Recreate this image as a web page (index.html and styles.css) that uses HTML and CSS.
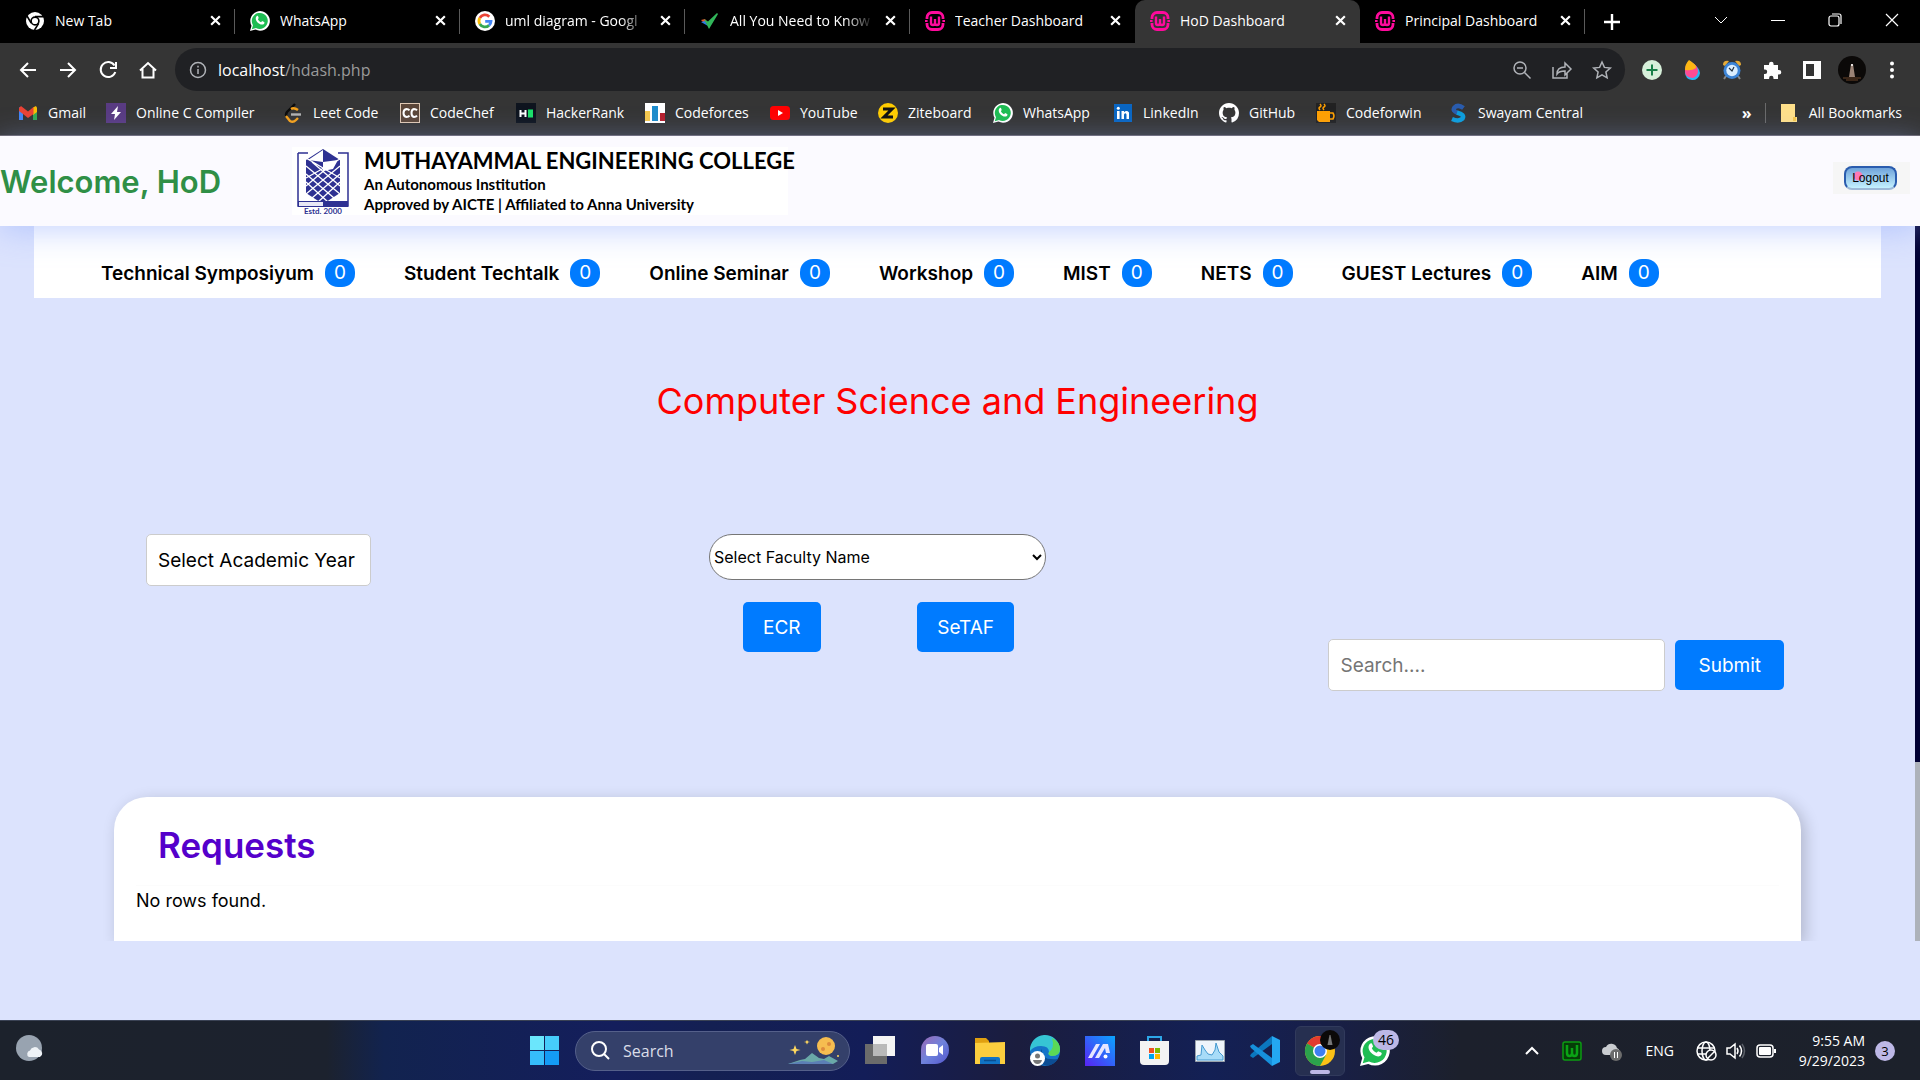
FILE: index.html
```html
<!DOCTYPE html>
<html lang="en">
<head>
<meta charset="utf-8">
<title>HoD Dashboard</title>
<link rel="stylesheet" href="styles.css">
</head>
<body>
<svg class="defs" aria-hidden="true">
  <symbol id="x" viewBox="0 0 12 12"><path d="M2 2l8 8M10 2l-8 8" stroke="#fff" stroke-width="2"/></symbol>
  <symbol id="wa" viewBox="0 0 20 20"><path d="M0 20l1.500-5.300A9.800 9.800 0 1 1 5.500 18.600z" fill="#fff"/><path d="M1.800 18.200l1.200-4a8 8 0 1 1 3 2.800z" fill="#1fbd53"/><path d="M6.600 5.200c.8-.8 1.400-.4 1.700.6l.4 1.200-.8 1.200c.7 1.500 1.700 2.400 3.200 3l1-1.100 2 .9c.8.500.300 1.600-.5 2.200-2 1.200-5-.5-6.500-2.300C5.600 9 5.100 6.800 6.600 5.200z" fill="#fff"/></symbol>
  <symbol id="wamp" viewBox="0 0 20 20"><path d="M2 8V6.500A5 5 0 0 1 7 1.500h6a5 5 0 0 1 5 5V8M2 12v1.500a5 5 0 0 0 5 5h6a5 5 0 0 0 5-5V12M1.200 9v2M18.800 9v2" fill="none" stroke="#ff0a9c" stroke-width="2.800"/><path d="M6 5.500v6.500q0 2 2 2t2-2V8v4q0 2 2 2t2-2V5.500" fill="none" stroke="#ff0a9c" stroke-width="2.400"/></symbol>
</svg>

<nav class="tabs" aria-label="Browser tabs">
  <div class="tab"><svg class="ico" viewBox="0 0 20 20"><circle cx="10" cy="10" r="9" fill="#fff"/><circle cx="10" cy="10" r="3.900" fill="#fff" stroke="#000" stroke-width="1.600"/><path d="M10 5.600h8.500M6.200 12.200L2 5M13.700 12.400L9.500 19" stroke="#000" stroke-width="1.600"/></svg><span>New Tab</span><svg class="close"><use href="#x"/></svg></div>
  <div class="tab"><svg class="ico"><use href="#wa"/></svg><span>WhatsApp</span><svg class="close"><use href="#x"/></svg></div>
  <div class="tab"><svg class="ico" viewBox="0 0 20 20"><circle cx="10" cy="10" r="10" fill="#fff"/><g fill="none" stroke-width="2.800"><path d="M14.300 5.700A6 6 0 0 0 4.800 7" stroke="#ea4335"/><path d="M4.800 7a6 6 0 0 0 0 6" stroke="#fbbc05"/><path d="M4.800 13a6 6 0 0 0 9.200 1.400" stroke="#34a853"/><path d="M14 14.400a6 6 0 0 0 2-4.100h-5.800" stroke="#4285f4"/></g></svg><span class="fade">uml diagram - Googl</span><svg class="close"><use href="#x"/></svg></div>
  <div class="tab"><svg class="ico" viewBox="0 0 20 20"><path d="M1 9l4-1 3 4-3 1z" fill="#e8562a"/><path d="M1 11l4-1 3 5z" fill="#2a7de1"/><path d="M4 8l4 2.500L17 2l1 1-9 15z" fill="#31b65a"/></svg><span class="fade">All You Need to Know</span><svg class="close"><use href="#x"/></svg></div>
  <div class="tab plain"><svg class="ico"><use href="#wamp"/></svg><span>Teacher Dashboard</span><svg class="close"><use href="#x"/></svg></div>
  <div class="tab active"><svg class="ico"><use href="#wamp"/></svg><span>HoD Dashboard</span><svg class="close"><use href="#x"/></svg></div>
  <div class="tab"><svg class="ico"><use href="#wamp"/></svg><span>Principal Dashboard</span><svg class="close"><use href="#x"/></svg></div>
  <button class="newtab" aria-label="New tab"><svg width="16" height="16"><path d="M8 0v16M0 8h16" stroke="#fff" stroke-width="2.400"/></svg></button>
  <div class="winctl">
    <button aria-label="Search tabs"><svg width="14" height="14"><path d="M1 4l6 6 6-6" fill="none" stroke="#fff"/></svg></button>
    <button aria-label="Minimize"><svg width="14" height="14"><path d="M0 7.500h14" stroke="#fff"/></svg></button>
    <button aria-label="Restore"><svg width="14" height="14" fill="none" stroke="#fff" stroke-width="1.200"><rect x="1" y="3" width="10" height="10" rx="2"/><path d="M4 1h7q2 0 2 2v8"/></svg></button>
    <button aria-label="Close"><svg width="14" height="14"><path d="M1 1l12 12M13 1L1 13" stroke="#fff" stroke-width="1.200"/></svg></button>
  </div>
</nav>

<div class="toolbar">
  <button aria-label="Back"><svg viewBox="0 0 20 20"><path d="M18 10H3M10 3l-7 7 7 7"/></svg></button>
  <button aria-label="Forward"><svg viewBox="0 0 20 20"><path d="M2 10h15M10 3l7 7-7 7"/></svg></button>
  <button aria-label="Reload"><svg viewBox="0 0 20 20"><path d="M16.500 5.500A7.500 7.500 0 1 0 17.300 12M18 2v6h-6"/></svg></button>
  <button aria-label="Home"><svg viewBox="0 0 20 20"><path d="M2 10.500L10 3l8 7.500M4.500 9v8.500h11V9"/></svg></button>
  <div class="address">
    <svg viewBox="0 0 20 20" class="dim"><circle cx="10" cy="10" r="7.500"/><path d="M10 9v5M10 5.800v1.800"/></svg>
    <p>localhost<span>/hdash.php</span></p>
    <svg viewBox="0 0 20 20" class="dim"><circle cx="8" cy="8" r="6"/><path d="M12.500 12.500l6 6M5 8h6"/></svg>
    <svg viewBox="0 0 20 20" class="dim"><path d="M1 7v11h14v-5M5 14q0-7 8-7V3l6 6-6 6v-4q-6 0-8 3z"/></svg>
    <svg viewBox="0 0 20 20" class="dim"><path d="M10 2l2.400 5.400 5.900.6-4.400 4 1.200 5.800L10 14.800l-5.100 3 1.200-5.800-4.400-4 5.900-.6z"/></svg>
  </div>
  <div class="extensions">
    <button aria-label="Extension"><svg viewBox="0 0 20 20"><circle cx="10" cy="10" r="10" fill="#d7f0da" stroke="none"/><path d="M10 4.500v11M4.500 10h11" stroke="#188048"/></svg></button>
    <button aria-label="Color picker"><svg viewBox="0 0 20 20" stroke="none"><path d="M8 1q10 7 10 12a7.500 7.500 0 0 1-8 7q-7-1-7-8Q3 6 8 1z" fill="#28b7f5"/><path d="M7 1q9 4 9 10 0 5-5 7-8 0-8-7Q3 5 7 1z" fill="#ff4b93"/><path d="M7 0q8 5 7 8Q10 11 3 10 3 4 7 0z" fill="#fdb713"/></svg></button>
    <button aria-label="Alarm"><svg viewBox="0 0 20 20" stroke="none"><path d="M1 5q0-5 6-4L3 6zM19 5q0-5-6-4l4 5z" fill="#e6ab38"/><path d="M4 16l-2 3M16 16l2 3" stroke="#888"/><circle cx="10" cy="10.500" r="8.500" fill="#3c84d6"/><circle cx="10" cy="10.500" r="5.700" fill="#dbeeff"/><path d="M7 8l3 3 2-4" stroke="#234" stroke-width="1.200" fill="none"/></svg></button>
    <button aria-label="Extensions"><svg viewBox="0 0 20 20"><path d="M2 5h5V4a2.300 2.300 0 0 1 4.600 0v1H16v5h1a2.300 2.300 0 0 1 0 4.600h-1V19h-4.500v-1a2.200 2.200 0 0 0-4.400 0v1H2v-5h1a2.200 2.200 0 0 0 0-4.400H2z" fill="#fff" stroke="none"/></svg></button>
    <button aria-label="Side panel"><svg viewBox="0 0 20 20"><path d="M1 1h18v18H1z" fill="#fff" stroke="none"/><path d="M4 4h8v12H4z" fill="#353535" stroke="none"/></svg></button>
    <button aria-label="Profile"><svg class="avatar" viewBox="0 0 28 28"><circle cx="14" cy="14" r="14" fill="#0b0908"/><path d="M13 8h2l2 13h-6z" fill="#9a8376"/><path d="M5 22h18M8 24h12" stroke="#6b4428" stroke-width="1"/><circle cx="14" cy="9" r="1" fill="#fff"/></svg></button>
    <button aria-label="Menu"><svg viewBox="0 0 20 20"><g fill="#fff" stroke="none"><circle cx="10" cy="3.500" r="2"/><circle cx="10" cy="10" r="2"/><circle cx="10" cy="16.500" r="2"/></g></svg></button>
  </div>
</div>

<nav class="bookmarks" aria-label="Bookmarks">
  <a href="#"><svg viewBox="0 0 20 20"><path d="M1 4v13h4V7z" fill="#4285f4"/><path d="M19 4v13h-4V7z" fill="#34a853"/><path d="M15 4.500L18 3l1 2v4l-4 3z" fill="#fbbc04"/><path d="M1 5l2-2 7 5.500L15.500 4v7L10 15l-5-4-4-3z" fill="#ea4335"/></svg>Gmail</a>
  <a href="#"><svg viewBox="0 0 20 20"><path d="M0 0h20v20H0z" fill="#593b82"/><path d="M12 3l-7 8h4l-1 6 7-8h-4z" fill="#fff"/></svg>Online C Compiler</a>
  <a href="#"><svg viewBox="0 0 20 20" fill="none" stroke-width="2.400"><path d="M12 1L4 9q-2 3 0 5" stroke="#0b0b0b"/><path d="M3 13l4 5q3 2 6-1l2-2M8 6q3-2 7 1" stroke="#f5a11a"/><path d="M8 11.500h10" stroke="#b3b3b3"/></svg>Leet Code</a>
  <a href="#"><svg viewBox="0 0 20 20"><path d="M0 0h20v20H0z" fill="#dfc8b3"/><path d="M1 1h18v18H1z" fill="#5b4638"/><path d="M9.500 7.300q-1-1.300-3-1.300Q3.500 6.500 3.500 10t3 4q2 0 3-1.300M17 7.300Q16 6 14 6q-2.500.5-2.500 4t2.500 4q2 0 3-1.300" fill="none" stroke="#fff" stroke-width="2"/></svg>CodeChef</a>
  <a href="#"><svg viewBox="0 0 20 20"><path d="M0 0h20v20H0z" fill="#0e141e"/><path d="M4.500 7v7M9.500 7v7M4.500 10.500h5" stroke="#fff" stroke-width="2"/><path d="M12 6.500h5v8h-5z" fill="#1be069"/></svg>HackerRank</a>
  <a href="#"><svg viewBox="0 0 20 20"><path d="M0 0h20v20H0z" fill="#fff"/><path d="M0 8h5v10H0z" fill="#f6c94d"/><path d="M7 3h6v15H7z" fill="#1e8ccb"/><path d="M15 10h5v8h-5z" fill="#b61f2c"/></svg>Codeforces</a>
  <a href="#"><svg viewBox="0 0 20 20"><rect y="3" width="20" height="14" rx="3.500" fill="#f00"/><path d="M8 7l5 3-5 3z" fill="#fff"/></svg>YouTube</a>
  <a href="#"><svg viewBox="0 0 20 20"><circle cx="10" cy="10" r="10" fill="#fc0"/><path d="M5 6h9l-8 8h9" fill="none" stroke="#111" stroke-width="3"/></svg>Ziteboard</a>
  <a href="#"><svg><use href="#wa"/></svg>WhatsApp</a>
  <a href="#"><svg viewBox="0 0 20 20"><path d="M1 1h18v18H1z" fill="#0a66c2"/><path d="M4 8h2.600v8H4zM8.500 8H11v1.200q2.800-2.400 5 .3V16h-2.500v-4.500q-1-2.500-2.500 0V16H8.500z" fill="#fff"/><circle cx="5.300" cy="5.300" r="1.500" fill="#fff"/></svg>LinkedIn</a>
  <a href="#"><svg viewBox="0 0 16 16"><path fill="#fff" d="M8 0C3.580 0 0 3.580 0 8c0 3.540 2.290 6.530 5.470 7.590.4.070.55-.17.55-.38 0-.19-.01-.82-.01-1.490-2.010.37-2.530-.49-2.690-.94-.09-.23-.48-.94-.82-1.130-.28-.15-.68-.52-.01-.53.63-.01 1.080.58 1.230.82.72 1.210 1.870.87 2.330.66.070-.52.28-.87.51-1.070-1.780-.2-3.640-.89-3.640-3.950 0-.87.31-1.590.82-2.150-.08-.2-.36-1.020.08-2.120 0 0 .67-.21 2.200.82.640-.18 1.320-.27 2-.27s1.360.09 2 .27c1.530-1.040 2.200-.82 2.200-.82.440 1.100.16 1.920.08 2.120.51.560.82 1.270.82 2.150 0 3.070-1.870 3.750-3.650 3.950.29.25.54.73.54 1.480 0 1.070-.01 1.930-.01 2.200 0 .21.15.46.55.38A8.010 8.010 0 0 0 16 8c0-4.420-3.580-8-8-8z"/></svg>GitHub</a>
  <a href="#"><svg viewBox="0 0 20 20"><path d="M0 0h20v20H0z" fill="#222"/><path d="M1 8h13v11H3l-2-2z" fill="#ffa000"/><path d="M14 10h3q2 3 0 6h-3M4 7q-2-2 0-3t0-3M8 7Q6 5 8 4t0-3" fill="none" stroke="#ffa000" stroke-width="1.500"/></svg>Codeforwin</a>
  <a href="#"><svg viewBox="0 0 20 20" fill="none" stroke-width="4.500"><path d="M15.500 5Q10 1 6.500 4.500 4 8 10 10" stroke="#2a5cad"/><path d="M9 9.600q8 2 5.500 6Q11 19 4 16" stroke="#0d9ddb"/></svg>Swayam Central</a>
  <button class="more" aria-label="More bookmarks">»</button>
  <a href="#" class="all"><svg viewBox="0 0 20 20"><path d="M2 1h14v13h2v5H2z" fill="#ffe08a"/><path d="M14 14h3v4h-3z" fill="#f5c64a"/></svg>All Bookmarks</a>
</nav>

<header class="site">
  <h1>Welcome, HoD</h1>
  <div class="college">
    <svg viewBox="0 0 54 66" width="54" height="66"><path d="M2 5h10M2 5v53h50V5H42" fill="none" stroke="#2e3192" stroke-width="1.500"/><path d="M27 1l17 11v33L27 56 10 45V12z" fill="#2e3192"/><path d="M27 2v12l-15-2zM27 14l15-2-5 9-10 2z" fill="#fff"/><path d="M10 18l34 28M10 26l28 24M10 34l22 20M16 14l28 24M10 10l34 20M44 18L10 46M44 26L16 50M44 34L22 54M38 14L10 38M44 11L10 30" stroke="#fff" stroke-width="1.300"/><path d="M2 53h50v6H2z" fill="#2e3192"/><path d="M3 54h24v4H3z" fill="#e8e8f5"/><text x="27" y="65.500" text-anchor="middle" class="estd">Estd. 2000</text></svg>
    <div><strong>MUTHAYAMMAL ENGINEERING COLLEGE</strong><b>An Autonomous Institution</b><b>Approved by AICTE | Affiliated to Anna University</b></div>
  </div>
  <div class="logout"><button>Logout</button></div>
</header>

<div class="viewport">
  <main>
    <ul class="counts">
      <li>Technical Symposiyum <span>0</span></li>
      <li>Student Techtalk <span>0</span></li>
      <li>Online Seminar <span>0</span></li>
      <li>Workshop <span>0</span></li>
      <li>MIST <span>0</span></li>
      <li>NETS <span>0</span></li>
      <li>GUEST Lectures <span>0</span></li>
      <li>AIM <span>0</span></li>
    </ul>
    <h2>Computer Science and Engineering</h2>
    <form class="filters">
      <select class="year" aria-label="Academic year"><option>Select Academic Year</option></select>
      <div class="faculty">
        <select aria-label="Faculty name"><option>Select Faculty Name</option></select>
        <div class="reports"><button type="button" class="btn">ECR</button><button type="button" class="btn">SeTAF</button></div>
      </div>
      <div class="search"><input type="text" placeholder="Search...." aria-label="Search"><button type="button" class="btn wide">Submit</button></div>
    </form>
    <section class="requests">
      <h2>Requests</h2>
      <p>No rows found.</p>
    </section>
  </main>
  <div class="track"><i></i></div>
</div>

<footer class="taskbar">
  <div><button aria-label="Weather"><svg width="30" height="28"><circle cx="14" cy="13" r="13" fill="#98a3b0"/><path d="M14 22a3.500 3.500 0 0 1 1-6.500 5 5 0 0 1 9-1 4 4 0 0 1 1 7.500z" fill="#eef2f6"/></svg></button></div>
  <div class="apps">
    <button aria-label="Start"><svg viewBox="0 0 30 30"><path d="M0 0h14v14H0z" fill="#6be6fc"/><path d="M15 0h14v14H15z" fill="#46ccfb"/><path d="M0 15h14v14H0z" fill="#36bdfb"/><path d="M15 15h14v14H15z" fill="#149bf6"/></svg></button>
    <button class="find"><svg width="20" height="20" fill="none" stroke="#fff" stroke-width="2"><circle cx="8" cy="8" r="7"/><path d="M13 13l5 5"/></svg><span>Search</span><svg width="52" height="30"><circle cx="38" cy="10" r="9" fill="#f6bd50"/><circle cx="41" cy="8" r="2" fill="#dd8b3d"/><circle cx="35" cy="13" r="2" fill="#dd8b3d"/><path d="M0 28l12-4 5-1 7-6 7 5 5 1 5-3 9 5-5 3z" fill="#6aa9a8"/><path d="M0 28l14-3 10 1 12-2 9 4z" fill="#5c7fb5"/><path d="M7 9l1.500 4 4 1-4 1L7 19l-1.500-4-4-1 4-1zM19 4l1 1.500 2 .5-2 .5-1 2-1-2-2-.5 2-.5z" fill="#ffd75e"/><circle cx="50" cy="20" r="1" fill="#ffd75e"/></svg></button>
    <button aria-label="Task view"><svg viewBox="0 0 30 30"><path d="M0 8h22v20H0z" fill="#6b6b6b"/><path d="M8 0h22v20H8z" fill="#f4f4f4"/><path d="M8 8h14v12H8z" fill="#b9b9b9"/></svg></button>
    <button aria-label="Chat"><svg viewBox="0 0 30 30"><linearGradient id="ch" x1="0" y1="0" x2="1" y2="1"><stop stop-color="#9d68b4"/><stop offset=".5" stop-color="#6f83dc"/><stop offset="1" stop-color="#5355cc"/></linearGradient><path d="M1 28V14A14 14 0 1 1 15 28z" fill="url(#ch)"/><rect x="6" y="8" width="12" height="12" rx="2" fill="#fff"/><path d="M19 12l4-3v10l-4-3z" fill="#fff"/></svg></button>
    <button aria-label="File Explorer"><svg viewBox="0 0 30 30"><path d="M0 2h11l3 3v5H0z" fill="#e0a010"/><path d="M0 7l30-1v22H0z" fill="#fcce3e"/><path d="M5 28v-5q0-2 2-2h16q2 0 2 2v5z" fill="#1174c6"/><path d="M9 24.500h12" stroke="#0a4f91" stroke-width="1.500"/></svg></button>
    <button aria-label="Edge"><svg viewBox="0 0 30 30"><circle cx="15" cy="15" r="15" fill="#1574c8"/><path d="M0 15A15 15 0 0 1 30 13q0 7-8 7-5-1-3-4 0-6-8-6Q4 10 0 15z" fill="#36c5d4"/><path d="M22 2q8 4 8 11 0 7-8 7-5-1-3-4 6-4 3-14z" fill="#5bd956"/><path d="M12 13q-2 12 16 10Q20 33 12 28q-6-7 0-15z" fill="#0c4d94"/><circle cx="7.500" cy="22.500" r="7.500" fill="#fff"/><circle cx="7.500" cy="20" r="2.500" fill="#777"/><path d="M3 24h9q-1 4-4.500 4T3 24z" fill="#777"/></svg></button>
    <button aria-label="MyASUS"><svg viewBox="0 0 30 30"><linearGradient id="ma" x1="0" y1="1" x2="1" y2="0"><stop stop-color="#5922f3"/><stop offset="1" stop-color="#0aa5ff"/></linearGradient><path d="M0 0h30v30H0z" fill="url(#ma)"/><path d="M3 22L11 8h4L7 22zM10 22l8-14h5l2 9h-4l-1-5-6 10z" fill="#e7e6ff"/><circle cx="20.500" cy="20.500" r="2" fill="#fff"/></svg></button>
    <button aria-label="Microsoft Store"><svg viewBox="0 0 30 30"><path d="M8 7V1h13v6" fill="none" stroke="#2da7e8" stroke-width="2"/><path d="M0 5h29v20q0 4-4 4H4q-4 0-4-4z" fill="#f3f3f3"/><path d="M9 12h5v5H9z" fill="#f25022"/><path d="M15 12h5v5h-5z" fill="#7fba00"/><path d="M9 18h5v5H9z" fill="#00a4ef"/><path d="M15 18h5v5h-5z" fill="#ffb900"/></svg></button>
    <button aria-label="Resource monitor"><svg viewBox="0 0 30 30"><path d="M.5 4.500h29v21H.500z" fill="#eef5fb" stroke="#9aa3ab"/><path d="M2 20l4-1 1-10 3 5 3 4 4 1 3-5 1-7 3 9 4 4v4H2z" fill="#a8dcf8" stroke="#459ad0"/></svg></button>
    <button aria-label="Visual Studio Code"><svg viewBox="0 0 30 30"><path d="M22 0l8 4v22l-8 4z" fill="#24a8f2"/><path d="M22 0v8L3 22l-3-2 1-2z" fill="#0b77be"/><path d="M22 30v-8L3 8l-3 2 1 2z" fill="#1690db"/></svg></button>
    <button class="current" aria-label="Chrome"><svg viewBox="0 0 30 30"><circle cx="15" cy="15" r="15" fill="#fbc116"/><path d="M15 15L2 7.500A15 15 0 0 1 28 7.500z" fill="#e33b2e"/><path d="M15 15L2 7.500A15 15 0 0 0 15 30l6-11z" fill="#2ba24c"/><circle cx="15" cy="15" r="7" fill="#fff"/><circle cx="15" cy="15" r="5.500" fill="#3f7ff0"/><circle cx="25" cy="4" r="10" fill="#0b0908"/><path d="M24.500-1h1l2 10h-5z" fill="#777"/></svg></button>
    <button class="wa" aria-label="WhatsApp"><svg><use href="#wa"/></svg><em>46</em></button>
  </div>
  <div class="tray">
    <svg width="14" height="20" fill="none" stroke="#fff" stroke-width="2"><path d="M1 13l6-6 6 6"/></svg>
    <svg class="w" width="20" height="20"><rect x="1" y="1" width="18" height="18" rx="2" fill="#063d08" stroke="#0b9c12" stroke-width="1.500"/><path d="M5 4v8q0 3 2.500 3T10 12V7v5q0 3 2.500 3T15 12V4" fill="none" stroke="#0aa315" stroke-width="2.500"/></svg>
    <svg class="cloud" width="21" height="20"><path d="M5 14a4 4 0 0 1 0-8 6 6 0 0 1 11 1 4 4 0 0 1 1 7z" fill="#c9ccd0"/><circle cx="15" cy="14" r="6" fill="#6c6c6c"/><path d="M13.500 11v6M16.500 11v6" stroke="#fff"/></svg>
    <span class="lang">ENG</span>
    <svg width="21" height="20" fill="none" stroke="#fff" stroke-width="1.500"><circle cx="10" cy="10" r="9"/><ellipse cx="10" cy="10" rx="4" ry="9"/><path d="M1 7h18M1 13h9"/><circle cx="15" cy="14" r="5" fill="#1c2029"/><path d="M11.500 17.500l7-7"/></svg>
    <svg class="vol" width="20" height="20" fill="none" stroke="#fff" stroke-width="1.500"><path d="M1 7h3l5-4v14l-5-4H1zM11 7q2 3 0 6M13.500 4.500q4 5.500 0 11"/><path d="M16 3q5 7 0 14" stroke="#5b5f68"/></svg>
    <svg class="bat" width="20" height="20"><rect x="1" y="4" width="16" height="12" rx="3" fill="none" stroke="#fff" stroke-width="1.500"/><rect x="3" y="6" width="12" height="8" rx="1" fill="#fff"/><path d="M18 8h2v4h-2z" fill="#fff"/></svg>
    <time>9:55 AM<br>9/29/2023</time>
    <span class="notes">3</span>
  </div>
</footer>
</body>
</html>
```
FILE: styles.css
```css
* { box-sizing: border-box; }
body {
  margin: 0;
  min-height: 100vh;
  display: flex;
  flex-direction: column;
  background: #dce3fd;
  font-family: Inter, sans-serif;
  color: #000;
}
.defs { position: absolute; width: 0; height: 0; }
button { border: 0; padding: 0; background: none; font: inherit; color: inherit; }
h1, h2, p, ul { margin: 0; padding: 0; }
svg { flex: none; overflow: visible; }

/* browser chrome */
.tabs, .toolbar, .bookmarks, .taskbar { font-family: "Open Sans", sans-serif; color: #fff; }
.tabs { display: flex; align-items: center; height: 43px; padding-left: 10px; background: #000; font-size: 14px; }
.tab {
  flex: 0 1 225px;
  min-width: 0;
  height: 43px;
  display: flex;
  align-items: center;
  gap: 10px;
  padding: 0 13px 2px 15px;
  background: linear-gradient(#5a5a5a, #5a5a5a) right center / 1px 25px no-repeat;
}
.tab span { flex: 1; min-width: 0; overflow: hidden; white-space: nowrap; }
.tab .fade { mask-image: linear-gradient(90deg, #000 80%, transparent); }
.tab.plain { background: none; }
.tab.active { background: #353535; border-radius: 10px 10px 0 0; }
.ico { width: 20px; height: 20px; }
.close { width: 13px; height: 13px; }
.newtab { width: 54px; display: flex; justify-content: center; }
.winctl { display: flex; margin-left: auto; height: 40px; }
.winctl button { width: 57px; height: 36px; display: grid; place-items: center; }

.toolbar { display: flex; align-items: center; height: 53px; padding: 0 8px; background: #353535; }
.toolbar button { width: 40px; height: 28px; display: grid; place-items: center; }
.toolbar svg { width: 20px; height: 20px; fill: none; stroke: #fff; stroke-width: 2; }
.toolbar .avatar { width: 28px; height: 28px; stroke: none; }
.extensions svg[stroke="none"] { stroke: none; }
.address {
  flex: 1;
  height: 43px;
  margin: 0 7px;
  padding: 0 13px;
  display: flex;
  align-items: center;
  gap: 20px;
  border-radius: 22px;
  background: #202124;
  font-size: 16px;
}
.address p { flex: 1; margin-left: -10px; }
.address p span { color: #9a9a9a; }
.address svg.dim { stroke: #b0b3b8; stroke-width: 1.5; }
.extensions { display: flex; }

.bookmarks {
  display: grid;
  grid-template-columns: 88px 177px 117px 116px 129px 125px 108px 115px 120px 106px 97px 132px 1fr auto auto;
  align-items: center;
  height: 40px;
  padding: 0 18px 6px;
  background: #353535;
  border-bottom: 1px solid #6b656b;
  font-size: 14px;
  white-space: nowrap;
}
.bookmarks a { display: flex; align-items: center; gap: 10px; color: inherit; text-decoration: none; }
.bookmarks svg { width: 20px; height: 20px; }
.more { margin-right: 13px; font-size: 16px; font-weight: 700; }
.bookmarks .all { border-left: 1px solid #6a6a6a; padding-left: 13px; }

/* site header */
.site {
  position: relative;
  z-index: 1;
  height: 90px;
  display: flex;
  align-items: center;
  background: #fbfaff;
  box-shadow: 0 6px 30px rgba(150, 175, 255, 0.5);
}
.site h1 { width: 292px; font-size: 31px; font-weight: 600; color: #2f8f46; white-space: nowrap; }
.college { display: flex; align-items: center; gap: 14px; width: 496px; height: 68px; padding-left: 4px; background: #fff; font-family: Lato, sans-serif; white-space: nowrap; }
.college strong { display: block; font-size: 22px; line-height: 26px; }
.college b { display: block; font-size: 15px; line-height: 20px; }
.estd { font: 700 8px Lato, sans-serif; fill: #2e3192; }
.logout { margin: 0 10px 6px auto; padding: 4px 13px 4px 11px; background: #f6f6f6; }
.logout button {
  display: block;
  width: 53px;
  height: 24px;
  border: 2px solid #2a5cae;
  border-bottom-color: #9db9d8;
  border-radius: 8px;
  background: radial-gradient(circle at 12px 8px, #ff78b4 4px, transparent 5px), linear-gradient(#6fa3da, #c4f1ff);
  font: 12px/18px "Liberation Sans", sans-serif;
}

/* page */
.viewport { flex: 1; display: flex; margin-bottom: 79px; }
main { flex: 1; min-width: 0; display: flex; flex-direction: column; overflow: hidden; }
.track { width: 5px; display: flex; background: #adb2ba; }
.track i { width: 5px; height: 75%; background: #000033; }

.counts { margin: 0 34px; padding: 32px 67px 0; height: 72px; display: flex; gap: 49px; background: #fff; list-style: none; font-size: 19px; font-weight: 600; white-space: nowrap; }
.counts li { display: flex; align-items: center; gap: 11px; height: 30px; }
.counts span { width: 30px; height: 28px; border-radius: 13px; background: #007bff; color: #fff; text-align: center; font-weight: 400; line-height: 28px; }
main > h2 { margin: 76px 0 106px; text-align: center; color: #f00; font-size: 36px; font-weight: 400; line-height: 54px; }

.filters { display: flex; align-items: flex-start; padding: 0 131px 0 146px; }
select, input { font-family: inherit; color: #000; background: #fff; }
.year { appearance: none; width: 225px; height: 52px; padding: 0 11px; border: 1px solid #ccc; border-radius: 5px; font-size: 19px; }
.faculty { width: 337px; margin-left: 338px; }
.faculty select { width: 100%; height: 46px; padding-right: 4px; border: 1px solid #767676; border-radius: 23px; font-size: 16px; }
.reports { display: flex; justify-content: space-between; padding: 22px 32px 0 34px; }
.btn { height: 50px; padding: 0 20px; border-radius: 5px; background: #007bff; color: #fff; font-size: 19px; }
.btn.wide { padding: 0 23px; }
.search { display: flex; align-items: center; gap: 10px; margin-left: auto; margin-top: 105px; }
.search input { width: 337px; height: 52px; padding: 0 11px; border: 1px solid #ccc; border-radius: 5px; font-size: 19px; }
.search input::placeholder { color: #757575; }

.requests { flex: 1; margin: 106px 114px 0; padding: 22px 22px 0; border-radius: 33px 33px 0 0; background: #fff; box-shadow: 4px 4px 16px rgba(0, 0, 0, 0.2); }
.requests h2 { padding: 0 22px 14px; font-size: 35px; font-weight: 600; line-height: 52px; color: #5500cb; border-bottom: 1px solid #fcfcfc; }
.requests p { font-size: 18px; line-height: 30px; }

/* desktop taskbar */
.taskbar {
  height: 60px;
  display: grid;
  grid-template-columns: 1fr auto 1fr;
  align-items: center;
  border-top: 1px solid #3a4254;
  background: linear-gradient(90deg, #1c222c 0, #1c222e 17%, #12234f 20%, #141e5c 32%, #142052 37%, #131d58 45%, #1b1d3e 53%, #132055 63%, #181f48 69%, #1c202c 76%, #1c212b 100%);
  font-size: 15px;
}
.taskbar > div:first-child { padding-left: 15px; display: flex; }
.apps { display: flex; gap: 5px; align-items: center; }
.apps button { width: 50px; height: 50px; display: grid; place-items: center; }
.apps button > svg { width: 30px; height: 30px; }
.apps .find { width: 275px; height: 40px; padding: 0 9px 0 15px; display: flex; align-items: center; gap: 12px; border: 1px solid #55608a; border-radius: 20px; background: #34406a; font-size: 16px; color: #dadde8; }
.find span { flex: 1; text-align: left; }
.apps .find svg:first-child { width: 20px; height: 20px; }
.apps .find svg:last-child { width: 52px; height: 30px; }
.apps .current { position: relative; border: 1px solid #313a5c; border-radius: 6px; background: #262f50; }
.current::after { content: ""; position: absolute; left: 14px; bottom: 1px; width: 20px; height: 4px; border-radius: 2px; background: #bdb8e6; }
.wa { position: relative; }
.wa em { position: absolute; right: 1px; top: 4px; width: 26px; height: 20px; border-radius: 10px; background: #bdb8e6; color: #000; font-size: 14px; font-style: normal; line-height: 20px; }
.tray { display: flex; align-items: center; justify-content: flex-end; padding-right: 25px; }
.tray .w { margin-left: 23px; }
.tray .cloud { margin-left: 19px; }
.lang { margin: 0 22px 0 24px; font-size: 14px; }
.vol { margin-left: 9px; }
.bat { margin-left: 10px; }
.tray time { width: 89px; text-align: right; font-size: 14px; line-height: 20px; }
.notes { width: 20px; height: 20px; margin-left: 10px; border-radius: 50%; background: #bdb8e6; color: #000; font-size: 13px; line-height: 20px; text-align: center; }
```
